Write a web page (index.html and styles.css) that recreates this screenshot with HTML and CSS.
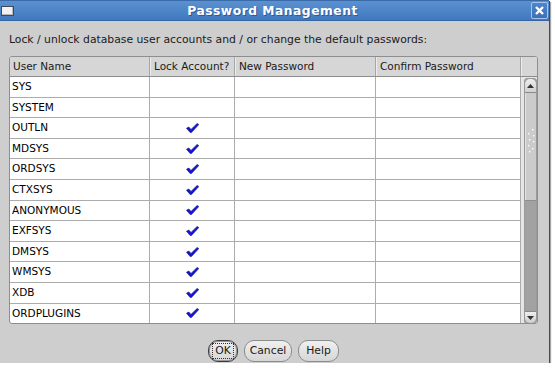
FILE: index.html
```html
<!DOCTYPE html>
<html lang="en">

<head>
    <meta charset="UTF-8">
    <title>Password Management</title>
    <link rel="stylesheet" href="styles.css">
</head>

<body>
    <div class="window">
        <!-- 标题栏 -->
        <div class="titlebar">
            <span class="winIcon"></span>
            <span class="title">Password Management</span>
            <span class="closeBtn">
                <svg width="11" height="11" viewBox="0 0 11 11">
                    <path d="M2 2 L9 9 M9 2 L2 9" stroke="#fff" stroke-width="2.4" fill="none" />
                </svg>
            </span>
        </div>

        <div class="content">
            <p class="desc">Lock / unlock database user accounts and / or change the default passwords:</p>

            <div class="table">
                <div class="thead">
                    <div class="th">User Name</div>
                    <div class="th">Lock Account?</div>
                    <div class="th">New Password</div>
                    <div class="th">Confirm Password</div>
                    <div class="th last"></div>
                </div>
                <div class="tbody">
                    <div class="rows" id="rows"></div>
                    <div class="scrollCol">
                        <div class="vscroll">
                            <div class="arrowBtn up">
                                <svg width="7" height="4" viewBox="0 0 7 4"><path d="M0 4 L3.5 0 L7 4 Z" fill="#333" /></svg>
                            </div>
                            <div class="thumb">
                                <svg width="10" height="26" viewBox="0 0 10 26">
                                    <g fill="#fff">
                                        <rect x="6" y="1" width="1.4" height="1.4" />
                                        <rect x="2" y="5" width="1.4" height="1.4" />
                                        <rect x="7" y="7" width="1.4" height="1.4" />
                                        <rect x="3" y="11" width="1.4" height="1.4" />
                                        <rect x="7" y="13" width="1.4" height="1.4" />
                                        <rect x="2" y="17" width="1.4" height="1.4" />
                                        <rect x="6" y="20" width="1.4" height="1.4" />
                                        <rect x="3" y="23" width="1.4" height="1.4" />
                                    </g>
                                </svg>
                            </div>
                            <div class="track"></div>
                            <div class="arrowBtn down">
                                <svg width="7" height="4" viewBox="0 0 7 4"><path d="M0 0 L3.5 4 L7 0 Z" fill="#333" /></svg>
                            </div>
                        </div>
                    </div>
                </div>
            </div>

            <div class="buttons">
                <span class="btn default"><span class="focus">OK</span></span>
                <span class="btn cancel">Cancel</span>
                <span class="btn help">Help</span>
            </div>
        </div>
    </div>
</body>
<script>
    // 用户列表  true = 锁定
    let users = [
        ["SYS", false],
        ["SYSTEM", false],
        ["OUTLN", true],
        ["MDSYS", true],
        ["ORDSYS", true],
        ["CTXSYS", true],
        ["ANONYMOUS", true],
        ["EXFSYS", true],
        ["DMSYS", true],
        ["WMSYS", true],
        ["XDB", true],
        ["ORDPLUGINS", true],
        ["", false] // 只露出一点点的下一行
    ];

    let check = '<svg width="13" height="10" viewBox="0 0 13 10">' +
        '<path d="M0.5 5.2 L2.8 4 L5 6.4 L11.2 0.4 L12.8 1.6 L5.4 9.6 L4.2 9.6 Z" fill="#1414d6" stroke="#0a0a80" stroke-width="0.6" />' +
        '</svg>';

    let rows = document.getElementById("rows");
    let html = "";
    for (let i = 0; i < users.length; i++) {
        html += '<div class="tr">' +
            '<div class="td">' + users[i][0] + '</div>' +
            '<div class="td center">' + (users[i][1] ? check : "") + '</div>' +
            '<div class="td"></div>' +
            '<div class="td"></div>' +
            '</div>';
    }
    rows.innerHTML = html;
</script>

</html>
```

FILE: styles.css
```css
* {
    margin: 0;
    padding: 0;
    box-sizing: border-box;
}

body {
    background-color: #fff;
    font-family: "DejaVu Sans", "Liberation Sans", sans-serif;
    font-size: 10.5px;
    color: #000;
}

.window {
    width: 549px;
    height: 363px;
    background-color: #cecece;
    box-shadow: 1px 1px 0 #4a4a4a, 2px 2px 1px rgba(0, 0, 0, 0.35);
    display: flex;
    flex-direction: column;
}

/* 标题栏 */
.titlebar {
    height: 21px;
    background: linear-gradient(#5b91d1, #4079c0);
    border-top: 1px solid #3a6aa8;
    border-bottom: 1px solid #3566a3;
    display: flex;
    align-items: center;
}

.winIcon {
    width: 13px;
    height: 10px;
    margin-left: 1px;
    background-color: #f2f2f2;
    border: 1px solid #404a58;
    box-shadow: inset -1px -1px 0 #b8b8b8;
}

.title {
    flex: 1;
    text-align: center;
    color: #fff;
    font-weight: bold;
    font-size: 12.3px;
    letter-spacing: 0.5px;
    text-shadow: 1px 1px 0 #2c5a94;
}

.closeBtn {
    width: 17px;
    height: 17px;
    margin-right: 1px;
    border: 1px solid #a8c4e6;
    border-radius: 2px;
    background: linear-gradient(#4d86cc, #3a70b6);
    display: flex;
    align-items: center;
    justify-content: center;
}

.content {
    flex: 1;
    padding: 0 11px 0 9px;
    display: flex;
    flex-direction: column;
}

.desc {
    margin-top: 12px;
    line-height: 14px;
    font-size: 10.8px;
    color: #1a1a1a;
}

/* 表格 */
.table {
    margin-top: 9px;
    height: 268px;
    border: 1px solid #8e8e8e;
    border-radius: 3px;
    background-color: #fff;
    display: flex;
    flex-direction: column;
    overflow: hidden;
}

.thead,
.tr {
    display: grid;
    grid-template-columns: 140px 85px 141px 145px;
}

.thead {
    grid-template-columns: 140px 85px 141px 145px 1fr;
    height: 20px;
    background-color: #d6d6d6;
    border-bottom: 1px solid #8c8c8c;
}

.th {
    padding-left: 3px;
    line-height: 19px;
    border-right: 1px solid #a6a6a6;
    border-left: 1px solid #ececec;
    color: #1a1a1a;
}

.th:first-child {
    border-left: none;
}

.th.last {
    border-right: none;
}

.tbody {
    flex: 1;
    display: flex;
    overflow: hidden;
}

.rows {
    width: 511px;
    overflow: hidden;
}

.tr {
    height: 20.6px;
    border-bottom: 1px solid #acacac;
}

.td {
    padding-left: 2px;
    line-height: 19.6px;
    border-right: 1px solid #acacac;
    white-space: nowrap;
    overflow: hidden;
}

.td.center {
    display: flex;
    align-items: center;
    justify-content: center;
    padding-left: 1px;
}

/* 滚动条 */
.scrollCol {
    flex: 1;
    background-color: #e6e6e6;
    padding: 1px 0 0 3px;
}

.vscroll {
    height: 246px;
    border: 1px solid #9a9a9a;
    border-radius: 3px;
    display: flex;
    flex-direction: column;
    overflow: hidden;
    background-color: #a2a2a2;
}

.arrowBtn {
    height: 14px;
    background: linear-gradient(#eeeeee, #cfcfcf);
    display: flex;
    align-items: center;
    justify-content: center;
}

.arrowBtn.up {
    border-bottom: 1px solid #8a8a8a;
    border-radius: 5px 5px 0 0;
}

.arrowBtn.down {
    height: 12px;
    border-top: 1px solid #8a8a8a;
    border-radius: 0 0 5px 5px;
}

.thumb {
    height: 108px;
    background-color: #cbcbcb;
    border-bottom: 1px solid #8e8e8e;
    box-shadow: inset 1px 0 0 #e4e4e4;
    display: flex;
    align-items: center;
    justify-content: center;
    padding-bottom: 12px;
}

.track {
    flex: 1;
}

/* 按钮 */
.buttons {
    margin-top: 16px;
    display: flex;
    justify-content: center;
    gap: 6px;
}

.btn {
    height: 22px;
    border: 1px solid #8c8c8c;
    border-radius: 10px;
    background: linear-gradient(#f0f0f0, #d6d6d6);
    line-height: 20px;
    font-size: 10.8px;
    color: #1a1a1a;
    display: flex;
    align-items: center;
    justify-content: center;
}

.btn.cancel {
    width: 48px;
}

.btn.help {
    width: 41px;
}

.btn.default {
    width: 30px;
    border-color: #3c3c3c;
    box-shadow: inset 0 0 0 1px #9a9a9a;
}

.focus {
    border: 1px dotted #333;
    padding: 0 2px;
    line-height: 14px;
}
```
